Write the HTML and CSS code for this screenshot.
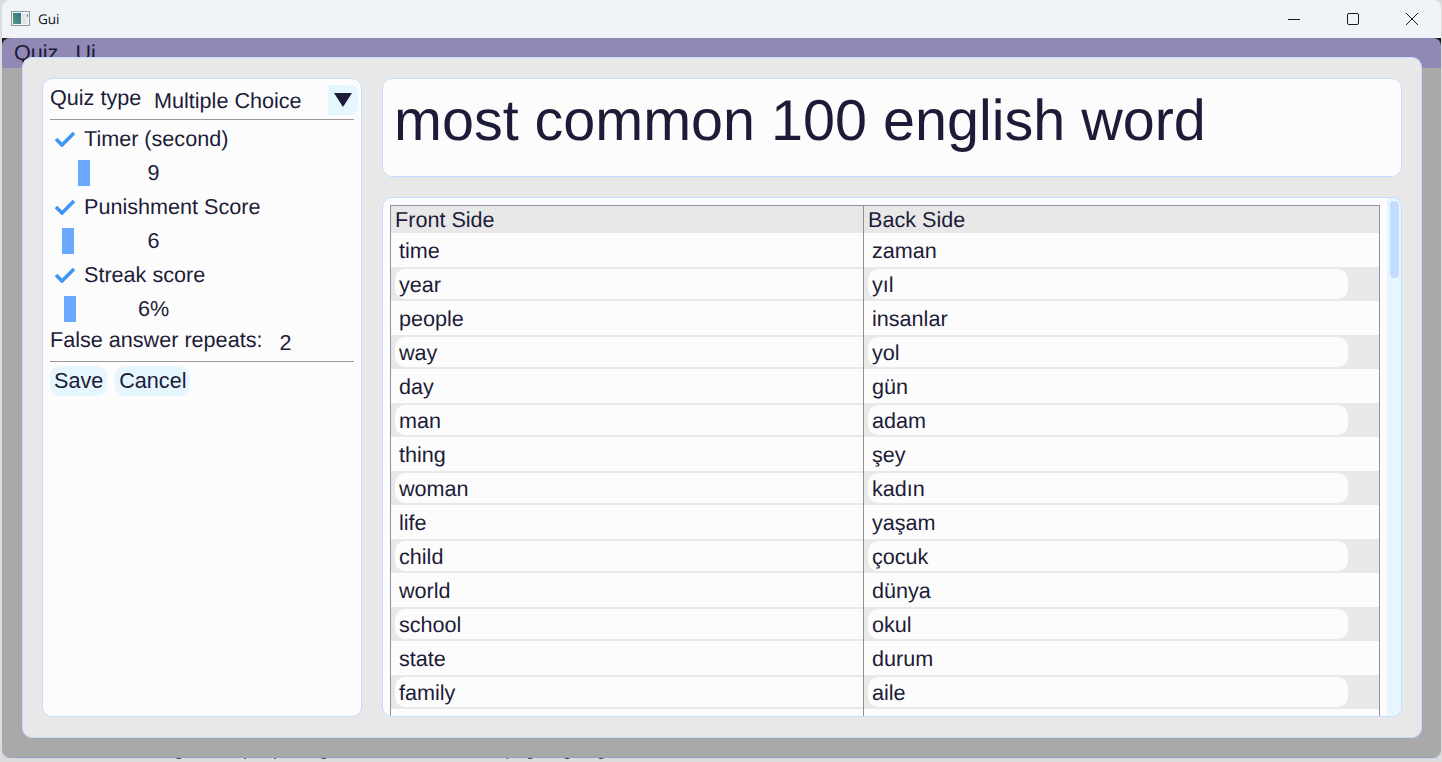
FILE: index.html
```html
<!DOCTYPE html>
<html lang="en">
<head>
    <meta charset="UTF-8">
    <title>Gui</title>
    <link rel="stylesheet" href="styles.css">
</head>
<body>
    <div class="desktop-text">ing the people, give them, and a page going</div>
    <div class="window">
        <div class="titlebar">
            <svg class="app-icon" width="20" height="16" viewBox="0 0 20 16">
                <defs>
                    <linearGradient id="appfill" x1="0" y1="1" x2="1" y2="0">
                        <stop offset="0" stop-color="#5a9a7c"/>
                        <stop offset="1" stop-color="#2f6f8f"/>
                    </linearGradient>
                </defs>
                <rect x="0.5" y="0.5" width="18" height="14" fill="#f2f4f4" stroke="#8d9a9c"/>
                <rect x="2" y="2" width="8" height="11" fill="url(#appfill)"/>
                <rect x="11" y="3" width="5" height="10" fill="#dfe6e4"/>
                <rect x="16" y="3" width="1" height="3" fill="#5a9a7c"/>
            </svg>
            <span class="title">Gui</span>
            <div class="win-buttons">
                <svg width="14" height="14" viewBox="0 0 14 14"><path d="M1 7.5H13" stroke="#1a1a1a" fill="none"/></svg>
                <svg width="14" height="14" viewBox="0 0 14 14"><rect x="1.5" y="1.5" width="11" height="11" rx="1.5" stroke="#1a1a1a" fill="none"/></svg>
                <svg width="14" height="14" viewBox="0 0 14 14"><path d="M1 1L13 13M13 1L1 13" stroke="#1a1a1a" fill="none"/></svg>
            </div>
        </div>

        <div class="app">
            <div class="menubar">
                <span>Quiz</span>
                <span>Ui</span>
            </div>

            <div class="modal">
                <div class="settings panel">
                    <div class="quiz-type">
                        <span class="quiz-label">Quiz type</span>
                        <span class="quiz-value">Multiple Choice</span>
                        <button class="drop-btn"><span class="triangle"></span></button>
                    </div>
                    <div class="divider"></div>

                    <div class="check-row">
                        <svg class="check" width="22" height="16" viewBox="0 0 22 16"><path d="M2 8L8 14L20 2" stroke="#3f97f5" stroke-width="3.6" fill="none"/></svg>
                        <span>Timer (second)</span>
                    </div>
                    <div class="slider">
                        <div class="thumb" style="margin-left: 28px"></div>
                        <span class="slider-value">9</span>
                    </div>

                    <div class="check-row">
                        <svg class="check" width="22" height="16" viewBox="0 0 22 16"><path d="M2 8L8 14L20 2" stroke="#3f97f5" stroke-width="3.6" fill="none"/></svg>
                        <span>Punishment Score</span>
                    </div>
                    <div class="slider">
                        <div class="thumb" style="margin-left: 12px"></div>
                        <span class="slider-value">6</span>
                    </div>

                    <div class="check-row">
                        <svg class="check" width="22" height="16" viewBox="0 0 22 16"><path d="M2 8L8 14L20 2" stroke="#3f97f5" stroke-width="3.6" fill="none"/></svg>
                        <span>Streak score</span>
                    </div>
                    <div class="slider">
                        <div class="thumb" style="margin-left: 14px"></div>
                        <span class="slider-value">6%</span>
                    </div>

                    <div class="repeats">
                        <span>False answer repeats:</span>
                        <span class="repeats-value">2</span>
                    </div>
                    <div class="divider"></div>

                    <div class="actions">
                        <button class="btn">Save</button>
                        <button class="btn">Cancel</button>
                    </div>
                </div>

                <div class="main">
                    <div class="quiz-title panel">most common 100 english word</div>
                    <div class="table-panel panel">
                        <div class="table-clip">
                            <table>
                                <colgroup>
                                    <col class="col-front">
                                    <col>
                                </colgroup>
                                <thead>
                                    <tr>
                                        <th>Front Side</th>
                                        <th>Back Side</th>
                                    </tr>
                                </thead>
                                <tbody>
                                    <tr><td><div class="cell">time</div></td><td><div class="cell">zaman</div></td></tr>
                                    <tr class="alt"><td><div class="cell">year</div></td><td><div class="cell">yıl</div></td></tr>
                                    <tr><td><div class="cell">people</div></td><td><div class="cell">insanlar</div></td></tr>
                                    <tr class="alt"><td><div class="cell">way</div></td><td><div class="cell">yol</div></td></tr>
                                    <tr><td><div class="cell">day</div></td><td><div class="cell">gün</div></td></tr>
                                    <tr class="alt"><td><div class="cell">man</div></td><td><div class="cell">adam</div></td></tr>
                                    <tr><td><div class="cell">thing</div></td><td><div class="cell">şey</div></td></tr>
                                    <tr class="alt"><td><div class="cell">woman</div></td><td><div class="cell">kadın</div></td></tr>
                                    <tr><td><div class="cell">life</div></td><td><div class="cell">yaşam</div></td></tr>
                                    <tr class="alt"><td><div class="cell">child</div></td><td><div class="cell">çocuk</div></td></tr>
                                    <tr><td><div class="cell">world</div></td><td><div class="cell">dünya</div></td></tr>
                                    <tr class="alt"><td><div class="cell">school</div></td><td><div class="cell">okul</div></td></tr>
                                    <tr><td><div class="cell">state</div></td><td><div class="cell">durum</div></td></tr>
                                    <tr class="alt"><td><div class="cell">family</div></td><td><div class="cell">aile</div></td></tr>
                                    <tr><td><div class="cell"></div></td><td><div class="cell"></div></td></tr>
                                </tbody>
                            </table>
                        </div>
                        <div class="scrollbar"><div class="scroll-thumb"></div></div>
                    </div>
                </div>
            </div>
        </div>
    </div>
</body>
</html>
```

FILE: styles.css
```css
html, body {
    margin: 0;
    height: 100%;
    overflow: hidden;
}
body {
    background-color: #dcdcdc;
    font-family: "Liberation Sans", Arial, sans-serif;
    font-size: 21.6px;
    color: #1c1c38;
    position: relative;
    text-rendering: geometricPrecision;
}
.desktop-text {
    position: absolute;
    left: 160px;
    top: 739px;
    font-size: 18px;
    color: #222;
    word-spacing: 12px;
    white-space: nowrap;
}
.window {
    position: relative;
    margin-left: 2px;
    width: 1439px;
    height: 758px;
    display: flex;
    flex-direction: column;
    border-radius: 8px;
    border-bottom: 1px solid #8fa0c0;
    box-sizing: border-box;
    overflow: hidden;
}

/* title bar */
.titlebar {
    height: 38px;
    flex: none;
    display: flex;
    align-items: center;
    background-color: #f0f3f8;
    padding-left: 9px;
    box-sizing: border-box;
}
.app-icon {
    margin-right: 7px;
}
.title {
    font-family: "Open Sans", sans-serif;
    font-size: 13.5px;
    color: #111;
}
.win-buttons {
    margin-left: auto;
    display: flex;
    gap: 45px;
    padding-right: 22px;
}

/* app area */
.app {
    flex: 1;
    position: relative;
    background: linear-gradient(#1c1c1c 0 10px, #a9a9a9 10px);
}
.menubar {
    height: 30px;
    background-color: #9288b6;
    border-radius: 8px 8px 0 0;
    display: flex;
    gap: 17px;
    padding: 1px 0 0 12px;
    line-height: 28px;
    box-sizing: border-box;
}
.modal {
    position: absolute;
    left: 20px;
    top: 19px;
    width: 1400px;
    height: 681px;
    box-sizing: border-box;
    background-color: #e8e8e8;
    border: 1px solid #c4dcff;
    border-radius: 10px;
    padding: 20px 19px;
    display: flex;
    gap: 20px;
    z-index: 1;
}
.panel {
    background-color: #fcfcfc;
    border: 1px solid #c4dcff;
    border-radius: 10px;
    box-sizing: border-box;
}

/* left settings */
.settings {
    width: 320px;
    flex: none;
    padding: 6px 7px;
    display: flex;
    flex-direction: column;
}
.quiz-type {
    display: flex;
    align-items: center;
    height: 30px;
}
.quiz-label {
    width: 104px;
    position: relative;
    top: -2px;
}
.quiz-value {
    position: relative;
    top: 1px;
}
.drop-btn {
    margin-left: auto;
    margin-right: -4px;
    width: 30px;
    height: 30px;
    border: none;
    border-radius: 0 8px 8px 0;
    background-color: #e6f6ff;
    padding: 0;
    display: flex;
    align-items: center;
    justify-content: center;
}
.triangle {
    width: 0;
    height: 0;
    border-left: 9px solid transparent;
    border-right: 9px solid transparent;
    border-top: 14px solid #1c1c38;
}
.divider {
    height: 1px;
    background-color: #999;
    margin-top: 4px;
}
.check-row {
    display: flex;
    align-items: center;
    height: 34px;
    margin-top: 2px;
    gap: 8px;
    padding-left: 4px;
}
.check-row ~ .check-row {
    margin-top: 0;
}
.slider {
    display: grid;
    height: 34px;
    width: 207px;
    align-items: center;
}
.thumb {
    grid-area: 1 / 1;
    justify-self: start;
    width: 12px;
    height: 26px;
    background-color: #6aa9ff;
}
.slider-value {
    grid-area: 1 / 1;
    justify-self: center;
}
.repeats {
    display: flex;
    align-items: center;
    height: 32px;
    margin-top: -2px;
}
.repeats-value {
    margin-left: 17px;
    position: relative;
    top: 3px;
}
.repeats + .divider {
    margin-top: 5px;
}
.actions {
    display: flex;
    gap: 8px;
    margin-top: 4px;
}
.btn {
    height: 30px;
    border: none;
    border-radius: 10px;
    background-color: #e6f6ff;
    font-family: inherit;
    font-size: inherit;
    color: inherit;
    padding: 0 4px;
}

/* right side */
.main {
    flex: 1;
    display: flex;
    flex-direction: column;
    gap: 20px;
}
.quiz-title {
    height: 99px;
    flex: none;
    font-size: 57.5px;
    line-height: 84px;
    padding-left: 11px;
}
.table-panel {
    flex: 1;
    min-height: 0;
    display: flex;
    padding: 7px 0 0 7px;
    overflow: hidden;
}
.table-clip {
    width: 990px;
    overflow: hidden;
    flex: none;
}
.scrollbar {
    margin: -7px 0 0 7px;
    flex: 1;
    background-color: #e6f6ff;
    padding: 3px 2px 0 3px;
}
.scroll-thumb {
    height: 77px;
    background-color: #c4dcff;
    border-radius: 4px;
}
table {
    width: 990px;
    table-layout: fixed;
    border-collapse: collapse;
}
.col-front {
    width: 473px;
}
th, td {
    border: 1px solid #8f8fa3;
    padding: 0;
    text-align: left;
}
th {
    background-color: #e8e8e8;
    font-weight: normal;
    height: 27px;
    padding: 1px 0 0 4px;
    box-sizing: border-box;
    line-height: 26px;
    border-bottom: none;
}
td {
    height: 34px;
    border-top: none;
    border-bottom: none;
}
.cell {
    height: 30px;
    line-height: 32px;
    margin: 2px 0 2px 4px;
    padding-left: 4px;
    border-radius: 10px 0 0 10px;
    background-color: #fcfcfc;
}
td:last-child .cell {
    margin-right: 31px;
    border-radius: 10px;
}
.alt td {
    background-color: #e8e8e8;
}
```
